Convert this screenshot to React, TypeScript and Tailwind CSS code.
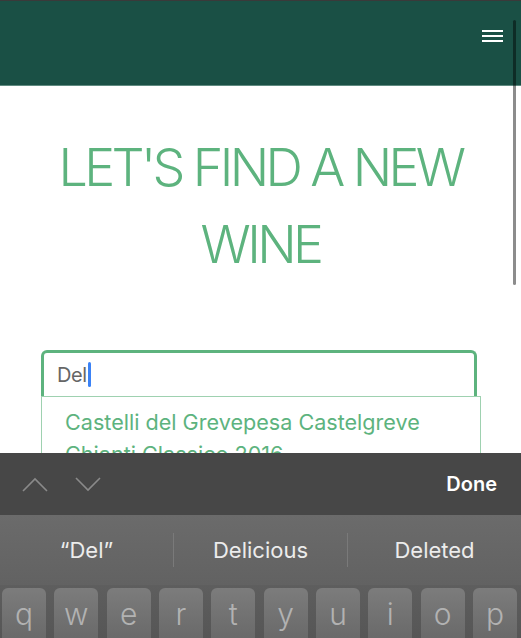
import React from "react";

const keys = ["q", "w", "e", "r", "t", "y", "u", "i", "o", "p"];

export default function App() {
  return (
    <div
      className="relative w-[521px] h-[638px] overflow-hidden bg-white"
      style={{ fontFamily: "Inter, 'Noto Sans', sans-serif" }}
    >
      <div className="h-px bg-[#3a3a3a]" />
      <header className="h-[85px] bg-[#1a5045] border-b border-[#5f8a80] flex items-start justify-end pr-[18px] pt-[29px]">
        <div className="flex flex-col gap-[3px] w-[21px]">
          <div className="h-[2px] bg-white" />
          <div className="h-[2px] bg-white" />
          <div className="h-[2px] bg-white" />
        </div>
      </header>

      <h1 className="mt-[43px] text-center text-[52px] leading-[77px] font-light tracking-[-0.07em] text-[#5db37e] px-[40px]">
        LET'S FIND A NEW WINE
      </h1>

      <div className="mt-[67px] pl-[41px] pr-[40px]">
        <div className="w-[436px] h-[46px] border-[3px] border-b-0 border-[#5db37e] rounded-t-[6px] flex items-center pl-[13px]">
          <span className="text-[20px] text-[#666666] tracking-[-0.02em]">Del</span>
          <span className="w-[3px] h-[25px] bg-[#3b82f6] rounded-full ml-[1px]" />
        </div>
        <div className="w-[440px] border border-[#9ed1b0] pl-[23px] pt-[9px] pb-[8px] text-[21.6px] leading-[32px] text-[#5db37e]">
          <div>Castelli del Grevepesa Castelgreve</div>
          <div>Chianti Classico 2016</div>
        </div>
      </div>

      <div className="absolute right-[5px] top-[20px] w-[3px] h-[265px] rounded-full bg-black/45" />

      <div className="absolute left-0 right-0 bottom-0 h-[185px]">
        <div className="h-[62px] bg-[#474747] flex items-center pl-[22px] pr-[24px]">
          <svg width="26" height="15" viewBox="0 0 26 15" className="mr-[27px]">
            <path d="M1 14 L13 2 L25 14" fill="none" stroke="#8a8a8a" strokeWidth="1.6" />
          </svg>
          <svg width="26" height="15" viewBox="0 0 26 15">
            <path d="M1 1 L13 13 L25 1" fill="none" stroke="#8a8a8a" strokeWidth="1.6" />
          </svg>
          <div className="flex-1" />
          <span className="text-white font-semibold text-[20px]">Done</span>
        </div>
        <div className="h-[70px] bg-gradient-to-b from-[#6b6b6b] to-[#626262] flex items-center text-[#ececec] text-[22px]">
          <div className="flex-1 text-center">“Del”</div>
          <div className="w-px h-[34px] bg-[#7a7a7a]" />
          <div className="flex-1 text-center">Delicious</div>
          <div className="w-px h-[34px] bg-[#7a7a7a]" />
          <div className="flex-1 text-center">Deleted</div>
        </div>
        <div className="h-[53px] bg-gradient-to-b from-[#5e5e5e] to-[#565656] flex gap-[8.5px] pl-[2px] pr-[4px] pt-[3px]">
          {keys.map((k) => (
            <div
              key={k}
              className="flex-1 h-[60px] rounded-[6px] bg-gradient-to-b from-[#7c7c7c] to-[#666666] flex justify-center pt-[6px] text-[30px] leading-[40px] font-light text-[#b2b2b2]"
            >
              {k}
            </div>
          ))}
        </div>
      </div>
    </div>
  );
}
